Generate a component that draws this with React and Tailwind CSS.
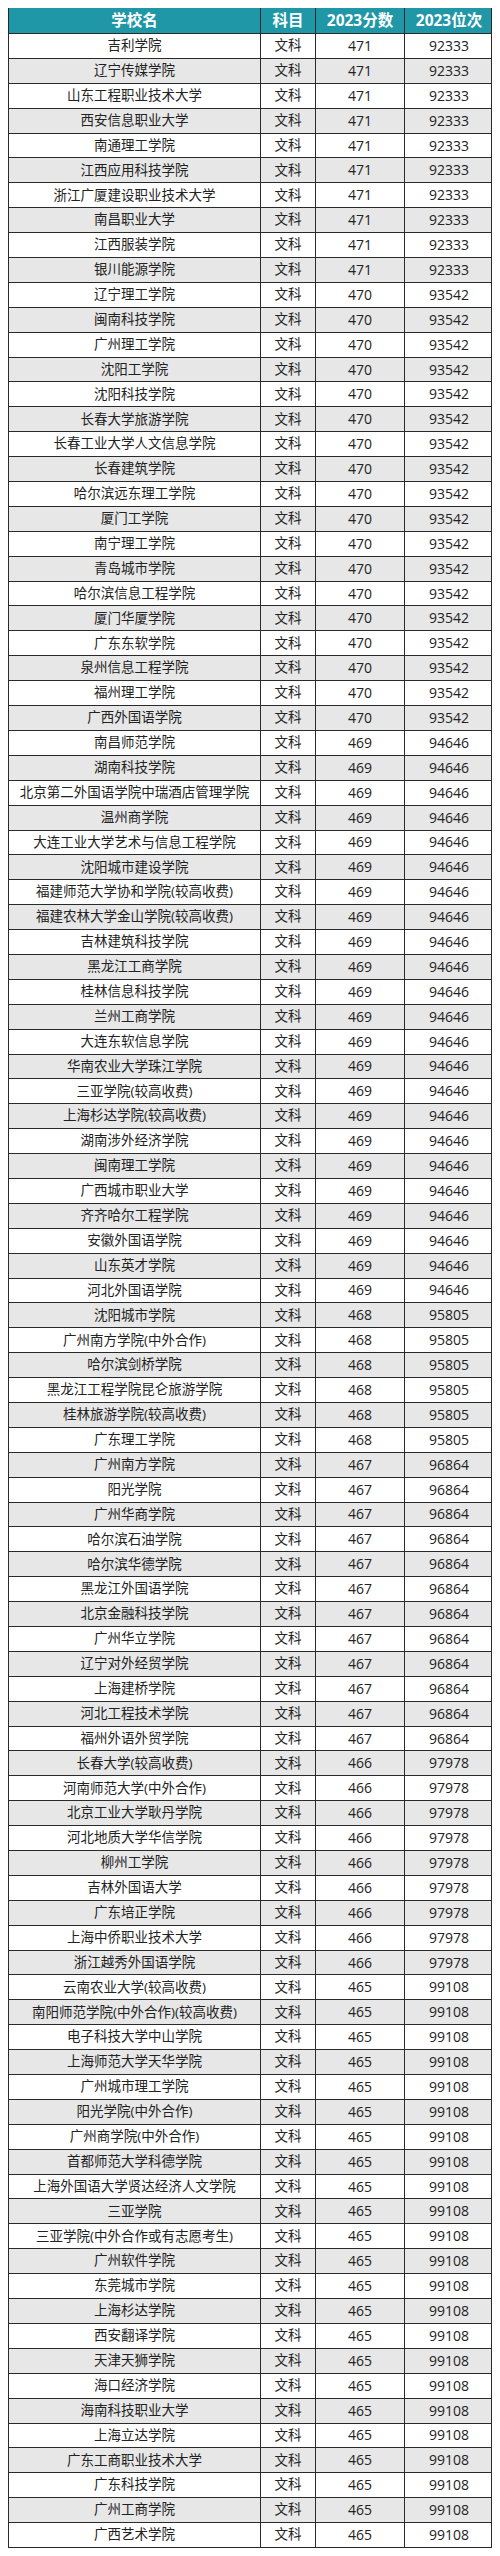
const rows = [
  ["吉利学院", "471", "92333"],
  ["辽宁传媒学院", "471", "92333"],
  ["山东工程职业技术大学", "471", "92333"],
  ["西安信息职业大学", "471", "92333"],
  ["南通理工学院", "471", "92333"],
  ["江西应用科技学院", "471", "92333"],
  ["浙江广厦建设职业技术大学", "471", "92333"],
  ["南昌职业大学", "471", "92333"],
  ["江西服装学院", "471", "92333"],
  ["银川能源学院", "471", "92333"],
  ["辽宁理工学院", "470", "93542"],
  ["闽南科技学院", "470", "93542"],
  ["广州理工学院", "470", "93542"],
  ["沈阳工学院", "470", "93542"],
  ["沈阳科技学院", "470", "93542"],
  ["长春大学旅游学院", "470", "93542"],
  ["长春工业大学人文信息学院", "470", "93542"],
  ["长春建筑学院", "470", "93542"],
  ["哈尔滨远东理工学院", "470", "93542"],
  ["厦门工学院", "470", "93542"],
  ["南宁理工学院", "470", "93542"],
  ["青岛城市学院", "470", "93542"],
  ["哈尔滨信息工程学院", "470", "93542"],
  ["厦门华厦学院", "470", "93542"],
  ["广东东软学院", "470", "93542"],
  ["泉州信息工程学院", "470", "93542"],
  ["福州理工学院", "470", "93542"],
  ["广西外国语学院", "470", "93542"],
  ["南昌师范学院", "469", "94646"],
  ["湖南科技学院", "469", "94646"],
  ["北京第二外国语学院中瑞酒店管理学院", "469", "94646"],
  ["温州商学院", "469", "94646"],
  ["大连工业大学艺术与信息工程学院", "469", "94646"],
  ["沈阳城市建设学院", "469", "94646"],
  ["福建师范大学协和学院(较高收费)", "469", "94646"],
  ["福建农林大学金山学院(较高收费)", "469", "94646"],
  ["吉林建筑科技学院", "469", "94646"],
  ["黑龙江工商学院", "469", "94646"],
  ["桂林信息科技学院", "469", "94646"],
  ["兰州工商学院", "469", "94646"],
  ["大连东软信息学院", "469", "94646"],
  ["华南农业大学珠江学院", "469", "94646"],
  ["三亚学院(较高收费)", "469", "94646"],
  ["上海杉达学院(较高收费)", "469", "94646"],
  ["湖南涉外经济学院", "469", "94646"],
  ["闽南理工学院", "469", "94646"],
  ["广西城市职业大学", "469", "94646"],
  ["齐齐哈尔工程学院", "469", "94646"],
  ["安徽外国语学院", "469", "94646"],
  ["山东英才学院", "469", "94646"],
  ["河北外国语学院", "469", "94646"],
  ["沈阳城市学院", "468", "95805"],
  ["广州南方学院(中外合作)", "468", "95805"],
  ["哈尔滨剑桥学院", "468", "95805"],
  ["黑龙江工程学院昆仑旅游学院", "468", "95805"],
  ["桂林旅游学院(较高收费)", "468", "95805"],
  ["广东理工学院", "468", "95805"],
  ["广州南方学院", "467", "96864"],
  ["阳光学院", "467", "96864"],
  ["广州华商学院", "467", "96864"],
  ["哈尔滨石油学院", "467", "96864"],
  ["哈尔滨华德学院", "467", "96864"],
  ["黑龙江外国语学院", "467", "96864"],
  ["北京金融科技学院", "467", "96864"],
  ["广州华立学院", "467", "96864"],
  ["辽宁对外经贸学院", "467", "96864"],
  ["上海建桥学院", "467", "96864"],
  ["河北工程技术学院", "467", "96864"],
  ["福州外语外贸学院", "467", "96864"],
  ["长春大学(较高收费)", "466", "97978"],
  ["河南师范大学(中外合作)", "466", "97978"],
  ["北京工业大学耿丹学院", "466", "97978"],
  ["河北地质大学华信学院", "466", "97978"],
  ["柳州工学院", "466", "97978"],
  ["吉林外国语大学", "466", "97978"],
  ["广东培正学院", "466", "97978"],
  ["上海中侨职业技术大学", "466", "97978"],
  ["浙江越秀外国语学院", "466", "97978"],
  ["云南农业大学(较高收费)", "465", "99108"],
  ["南阳师范学院(中外合作)(较高收费)", "465", "99108"],
  ["电子科技大学中山学院", "465", "99108"],
  ["上海师范大学天华学院", "465", "99108"],
  ["广州城市理工学院", "465", "99108"],
  ["阳光学院(中外合作)", "465", "99108"],
  ["广州商学院(中外合作)", "465", "99108"],
  ["首都师范大学科德学院", "465", "99108"],
  ["上海外国语大学贤达经济人文学院", "465", "99108"],
  ["三亚学院", "465", "99108"],
  ["三亚学院(中外合作或有志愿考生)", "465", "99108"],
  ["广州软件学院", "465", "99108"],
  ["东莞城市学院", "465", "99108"],
  ["上海杉达学院", "465", "99108"],
  ["西安翻译学院", "465", "99108"],
  ["天津天狮学院", "465", "99108"],
  ["海口经济学院", "465", "99108"],
  ["海南科技职业大学", "465", "99108"],
  ["上海立达学院", "465", "99108"],
  ["广东工商职业技术大学", "465", "99108"],
  ["广东科技学院", "465", "99108"],
  ["广州工商学院", "465", "99108"],
  ["广西艺术学院", "465", "99108"],
];

const font = {
  fontFamily: '"Open Sans", "Noto Sans CJK SC", sans-serif',
};

export default function App() {
  return (
    <div className="w-[500px] bg-white pt-[8px] pb-[9px] pl-[8px]" style={font}>
      <div className="w-[484px] border-x border-b border-[#2a2a2a]">
        <div className="grid grid-cols-[252px_55px_89px_88px] h-[25px] bg-[#1f97a6] text-white font-bold text-[15.5px] leading-none">
          <div className="flex items-center justify-center border-r border-[#2a2a2a]">学校名</div>
          <div className="flex items-center justify-center border-r border-[#2a2a2a]">科目</div>
          <div className="flex items-center justify-center border-r border-[#2a2a2a]">2023分数</div>
          <div className="flex items-center justify-center">2023位次</div>
        </div>
        {rows.map((r, i) => (
          <div
            key={i}
            className={`grid grid-cols-[252px_55px_89px_88px] h-[24.9px] border-t border-[#2a2a2a] text-[13.5px] leading-none text-[#222] ${
              i % 2 === 1 ? "bg-[#e7e7e7]" : "bg-white"
            }`}
          >
            <div className="flex items-center justify-center border-r border-[#2a2a2a] whitespace-nowrap">{r[0]}</div>
            <div className="flex items-center justify-center border-r border-[#2a2a2a]">文科</div>
            <div className="flex items-center justify-center border-r border-[#2a2a2a] text-[14px]">{r[1]}</div>
            <div className="flex items-center justify-center text-[14px]">{r[2]}</div>
          </div>
        ))}
      </div>
    </div>
  );
}
